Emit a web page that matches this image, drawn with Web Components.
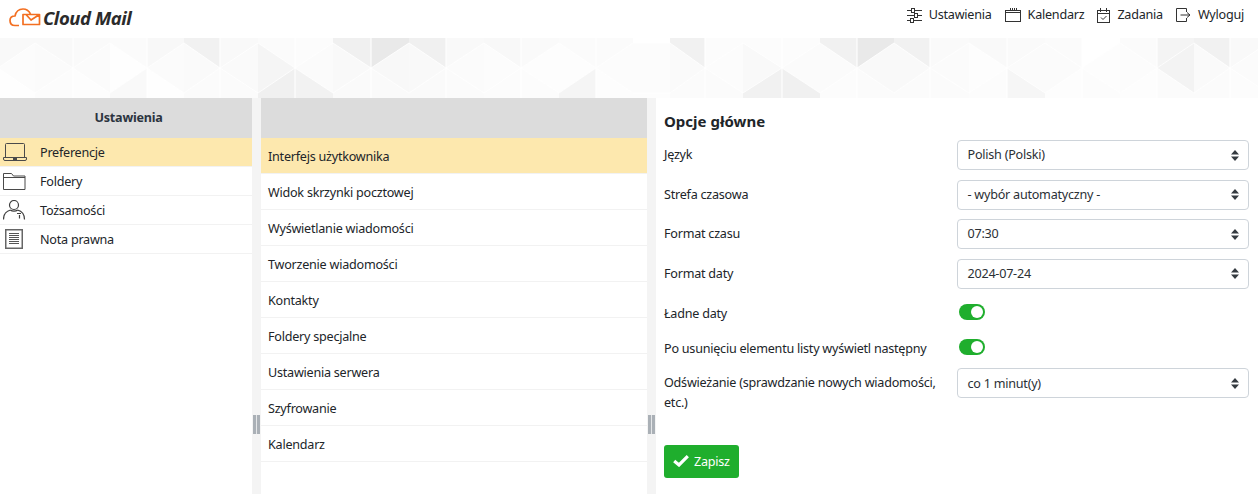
<!doctype html>
<html lang="pl">
<head>
<meta charset="utf-8">
<title>Cloud Mail</title>
<style>
  html, body { margin: 0; height: 100%; background: #fff; }
  body { font: 12.600px/19.500px "Noto Sans", sans-serif; letter-spacing: -.24px; color: #212529; overflow: hidden; }
</style>
</head>
<body>
<mail-app>
  <top-bar>
    <nav-link label="Ustawienia" icon="sliders"></nav-link>
    <nav-link label="Kalendarz" icon="calendar"></nav-link>
    <nav-link label="Zadania" icon="tasks"></nav-link>
    <nav-link label="Wyloguj" icon="logout"></nav-link>
  </top-bar>
  <triangle-banner></triangle-banner>
  <settings-layout>
    <list-pane slot="sections" title="Ustawienia">
      <section-row icon="laptop" active>Preferencje</section-row>
      <section-row icon="folder">Foldery</section-row>
      <section-row icon="person">Tożsamości</section-row>
      <section-row icon="doc">Nota prawna</section-row>
    </list-pane>
    <list-pane slot="groups">
      <group-row active>Interfejs użytkownika</group-row>
      <group-row>Widok skrzynki pocztowej</group-row>
      <group-row>Wyświetlanie wiadomości</group-row>
      <group-row>Tworzenie wiadomości</group-row>
      <group-row>Kontakty</group-row>
      <group-row>Foldery specjalne</group-row>
      <group-row>Ustawienia serwera</group-row>
      <group-row>Szyfrowanie</group-row>
      <group-row>Kalendarz</group-row>
    </list-pane>
    <options-form slot="form" title="Opcje główne">
      <form-row label="Język"><fake-select>Polish (Polski)</fake-select></form-row>
      <form-row label="Strefa czasowa"><fake-select>- wybór automatyczny -</fake-select></form-row>
      <form-row label="Format czasu"><fake-select>07:30</fake-select></form-row>
      <form-row label="Format daty"><fake-select>2024-07-24</fake-select></form-row>
      <form-row label="Ładne daty" kind="toggle"><on-toggle></on-toggle></form-row>
      <form-row label="Po usunięciu elementu listy wyświetl następny" kind="toggle"><on-toggle></on-toggle></form-row>
      <form-row label="Odświeżanie (sprawdzanie nowych wiadomości, etc.)"><fake-select>co 1 minut(y)</fake-select></form-row>
      <save-button>Zapisz</save-button>
    </options-form>
  </settings-layout>
</mail-app>

<script>
  const ICONS = {
    sliders: `<svg width="15" height="15" viewBox="0 0 15 15" fill="none" stroke="#333" stroke-width="1"><path d="M0 2.500h4M8 2.500h7M0 7.500h7.500M11 7.500h4M0 12.500h3M7 12.500h8"/><rect x="4.500" y=".5" width="3" height="4"/><rect x="7.500" y="5.500" width="3" height="4"/><rect x="3.500" y="10.500" width="3" height="4"/></svg>`,
    calendar: `<svg width="16" height="14" viewBox="0 0 16 14" fill="none" stroke="#333" stroke-width="1"><rect x=".5" y="2.500" width="15" height="11"/><path d="M.5 4.500h15M5.500 0v3M7.500 0v3M9.500 0v3M11.500 0v3"/></svg>`,
    tasks: `<svg width="13" height="15" viewBox="0 0 13 15" fill="none" stroke="#333" stroke-width="1"><rect x=".5" y="2.500" width="12" height="12"/><path d="M.5 5.500h12M3.500 0v4M9.500 0v4M4 9.500l2 2 3.500-3.500"/></svg>`,
    logout: `<svg width="15" height="14" viewBox="0 0 15 14" fill="none" stroke="#333" stroke-width="1"><path d="M10.500 4V.5h-10v13h10V10M4.500 7h9.500M11 4.500 14 7l-3 2.500"/></svg>`,
    laptop: `<svg width="24" height="18" viewBox="0 0 24 18" fill="none" stroke="#4a4a4a" stroke-width="1"><path d="M2.500 14V1.500q0-1 1-1h17q1 0 1 1V14"/><path d="M.5 14.500h23v1.500q0 1.500-1.500 1.500H2q-1.500 0-1.500-1.500z"/><path d="M10 16h4" stroke-width="2"/></svg>`,
    folder: `<svg width="23" height="17" viewBox="0 0 23 17" fill="none" stroke="#4a4a4a" stroke-width="1"><path d="M.5 16.500V.5h8l2 2.500h11.500v13.500zM.5 4.500h21.500"/></svg>`,
    person: `<svg width="23" height="20" viewBox="0 0 23 20" fill="none" stroke="#3f3f3f" stroke-width="1.200"><circle cx="11" cy="5" r="4.500"/><path d="M.5 19.500c0-5 3-8.500 7-9.500M21.500 19.500c0-5-3-8.500-7-9.500M7.500 10c1.500 1.500 5.500 1.500 7 0M16.500 15v3.500M14 13.500h4"/></svg>`,
    doc: `<svg width="18" height="20" viewBox="0 0 18 20" fill="none" style="margin-left:2px"><rect x=".75" y=".75" width="16.500" height="18.500" stroke="#666" stroke-width="1.500"/><path d="M4 4.500h10M4 6.500h10M4 8.500h10M4 10.500h10M4 12.500h10M4 14.500h10" stroke="#555"/></svg>`
  }

  // shades read off the banner, one [top, middle, bottom] per column
  const BANNER_X = [-2,35,73,110,147,184,220,258,295,333,371,409,446,484,521,559,596,633,670,705,743,782,820,857,894,930,969,1007,1045,1082,1120,1157,1194,1230,1268]
  const BANNER_LOW = [0,2,4,6,8,10,12,14,16,19,21,23,25,27,29,31,33]
  const BANNER_SHADES = [
    'f9 fc fe','f9 fb fc','fa fb fd','fb fe f9','f8 fb fe','f1 fa fb','f9 fa fb','fb f5 f0','fc fb f2',
    'f0 f9 fa','e9 f8 fa','f0 f9 fa','f9 fb fb','f8 fc fc','fa fd fc','fb fd f5','fb fc fd','ff fc fd',
    'f1 fa fb','fc fc fb','fc f9 f1','fc fb f0','f1 fb fc','e9 f9 fb','f1 f9 fb','fa fb fb','f9 fd fc',
    'fa fb f6','fb fb fd','ff fd fc','fb fc fd','f4 f3 fb','f1 fa fb','f9 fb fc'
  ]

  function shade (s) { return '#' + s + s + s }

  class MailApp extends HTMLElement {
    constructor () {
      super()
      this.attachShadow({ mode: 'open' }).innerHTML = `
        <style>:host { display: flex; flex-direction: column; height: 494px; }</style>
        <slot></slot>`
    }
  }

  class TopBar extends HTMLElement {
    constructor () {
      super()
      this.attachShadow({ mode: 'open' }).innerHTML = `
        <style>
          :host { display: flex; align-items: flex-start; justify-content: space-between; height: 38px; padding: 0 14px 0 9px; box-sizing: border-box; background: #fff; }
          .logo { display: flex; align-items: center; gap: 2px; padding-top: 7px; }
          .name { font: italic 700 18.500px/20px "Open Sans", sans-serif; letter-spacing: -.45px; color: #2b2b2b; padding-top: 1px; }
          nav { display: flex; gap: 13px; }
        </style>
        <div class="logo">
          <svg width="32" height="19" viewBox="0 0 32 19" fill="none" stroke="#f36f21" stroke-width="1.700" stroke-linejoin="round">
            <path d="M10 17.500H6C2.500 17.500 1 15 1 12.500 1 9.500 3 8 6 8 7 3.500 10 1 14 1c3.500 0 6 2 7.500 5"/>
            <path d="M14 16.500V6.500h16.500v10zM17 6.500l5 5.500 8.500-5.500"/>
          </svg>
          <span class="name">Cloud Mail</span>
        </div>
        <nav><slot></slot></nav>`
    }
  }

  class NavLink extends HTMLElement {
    constructor () {
      super()
      this.attachShadow({ mode: 'open' }).innerHTML = `
        <style>
          :host { display: flex; align-items: center; gap: 7px; line-height: 30px; }
          svg { display: block; }
        </style>
        ${ICONS[this.getAttribute('icon')]}
        <span>${this.getAttribute('label')}</span>`
    }
  }

  class TriangleBanner extends HTMLElement {
    constructor () {
      super()
      let polys = ''
      let lines = ''
      BANNER_SHADES.forEach((row, i) => {
        let [top, mid, bot] = row.split(' ').map(shade)
        let l = BANNER_X[i]
        let r = BANNER_X[i + 1]
        let ly = BANNER_LOW.includes(i) ? [30, 30] : [5, 55]
        let ry = BANNER_LOW.includes(i + 1) ? [30, 30] : [5, 55]
        polys += `<polygon fill="${top}" points="${l},0 ${r},0 ${r},${ry[0]} ${l},${ly[0]}"/>`
        polys += `<polygon fill="${mid}" points="${l},${ly[0]} ${r},${ry[0]} ${r},${ry[1]} ${l},${ly[1]}"/>`
        polys += `<polygon fill="${bot}" points="${l},${ly[1]} ${r},${ry[1]} ${r},60 ${l},60"/>`
        lines += `<path d="M${l} ${ly[0]}L${r} ${ry[0]}M${l} ${ly[1]}L${r} ${ry[1]}"/>`
        if (BANNER_LOW.includes(i)) lines += `<path d="M${l} 0V60" stroke-width="1.500"/>`
      })
      this.attachShadow({ mode: 'open' }).innerHTML = `
        <style>
          :host { display: block; height: 60px; background: #fbfbfb; overflow: hidden; }
          svg { display: block; }
        </style>
        <svg width="1258" height="60" viewBox="0 0 1258 60">${polys}<g stroke="#fff" stroke-opacity=".75" fill="none">${lines}</g></svg>`
    }
  }

  class SettingsLayout extends HTMLElement {
    constructor () {
      super()
      this.attachShadow({ mode: 'open' }).innerHTML = `
        <style>
          :host { display: grid; grid-template-columns: 252px 9px 386px 9px 1fr; flex: 1; min-height: 0; background: #fff; }
          .gap { background: #f4f4f4; display: flex; justify-content: center; padding: 317px 1px 0 0; box-sizing: border-box; }
          .grip { height: 19px; border-left: 3px solid #aab0b6; border-right: 3px solid #aab0b6; box-sizing: border-box; width: 7px; background: #e4e6e8; }
        </style>
        <slot name="sections"></slot>
        <div class="gap"><div class="grip"></div></div>
        <slot name="groups"></slot>
        <div class="gap"><div class="grip"></div></div>
        <slot name="form"></slot>`
    }
  }

  class ListPane extends HTMLElement {
    constructor () {
      super()
      this.attachShadow({ mode: 'open' }).innerHTML = `
        <style>
          :host { display: block; background: #fff; }
          header { height: 40px; padding: 0 0 1px 5px; box-sizing: border-box; background: #dcdcdc; display: flex; align-items: center; justify-content: center; font-weight: 700; color: #2c3440; }
        </style>
        <header>${this.getAttribute('title') || ''}</header>
        <slot></slot>`
      this.removeAttribute('title')
    }
  }

  class SectionRow extends HTMLElement {
    constructor () {
      super()
      this.attachShadow({ mode: 'open' }).innerHTML = `
        <style>
          :host { display: flex; align-items: center; height: 29px; box-sizing: border-box; border-bottom: 1px solid #f2f2f2; }
          :host([active]) { background: #fde8ae; }
          .ic { width: 40px; display: flex; padding-left: 3px; box-sizing: border-box; }
          svg { display: block; }
          .tx { padding-top: 2px; }
        </style>
        <span class="ic">${ICONS[this.getAttribute('icon')]}</span><span class="tx"><slot></slot></span>`
    }
  }

  class GroupRow extends HTMLElement {
    constructor () {
      super()
      this.attachShadow({ mode: 'open' }).innerHTML = `
        <style>
          :host { display: flex; align-items: center; height: 36px; padding: 2px 0 0 7px; box-sizing: border-box; border-bottom: 1px solid #f2f2f2; }
          :host([active]) { background: #fde8ae; }
        </style>
        <slot></slot>`
    }
  }

  class OptionsForm extends HTMLElement {
    constructor () {
      super()
      this.attachShadow({ mode: 'open' }).innerHTML = `
        <style>
          :host { display: block; padding: 12px 9px 0 8px; }
          h2 { margin: 0 0 7px; font-size: 15px; line-height: 23px; font-weight: 700; letter-spacing: 0; color: #212529; }
        </style>
        <h2>${this.getAttribute('title')}</h2>
        <slot></slot>`
      this.removeAttribute('title')
    }
  }

  class FormRow extends HTMLElement {
    constructor () {
      super()
      this.attachShadow({ mode: 'open' }).innerHTML = `
        <style>
          :host { display: grid; grid-template-columns: 293px 1fr; margin-bottom: 9.600px; }
          :host([kind=toggle]) { margin-bottom: 8px; min-height: 27px; align-items: center; }
          .label { padding-right: 12px; padding-top: 5px; }
          :host([kind=toggle]) .label { padding-top: 3px; }
        </style>
        <div class="label">${this.getAttribute('label')}</div>
        <div><slot></slot></div>`
    }
  }

  class FakeSelect extends HTMLElement {
    constructor () {
      super()
      this.attachShadow({ mode: 'open' }).innerHTML = `
        <style>
          :host { display: flex; align-items: center; justify-content: space-between; height: 30px; box-sizing: border-box; padding: 0 9px 0 9.500px; border: 1px solid #ced4da; border-radius: 4px; background: #fff; color: #2b3035; }
          svg { display: block; }
        </style>
        <span><slot></slot></span>
        <svg width="8" height="11" viewBox="0 0 8 11" fill="#343a40"><path d="M4 0l4 4.500H0zM0 6.500h8L4 11z"/></svg>`
    }
  }

  class OnToggle extends HTMLElement {
    constructor () {
      super()
      this.attachShadow({ mode: 'open' }).innerHTML = `
        <style>
          :host { display: flex; justify-content: flex-end; align-items: center; width: 26px; height: 16px; margin-left: 2px; padding: 0 2px; box-sizing: border-box; border-radius: 8px; background: #1fae2d; }
          i { display: block; width: 12px; height: 12px; border-radius: 50%; background: #fff; }
        </style>
        <i></i>`
    }
  }

  class SaveButton extends HTMLElement {
    constructor () {
      super()
      this.attachShadow({ mode: 'open' }).innerHTML = `
        <style>
          :host { display: inline-flex; align-items: center; gap: 5px; width: 75px; height: 33px; margin-top: 23px; padding: 0 0 0 9px; box-sizing: border-box; border-radius: 3px; background: #1fae2d; color: #fff; }
          svg { display: block; }
        </style>
        <svg width="16" height="12" viewBox="0 0 16 12" fill="none" stroke="#fff" stroke-width="3.200"><path d="M1.200 6l4.800 4L14.800 1.200"/></svg>
        <slot></slot>`
    }
  }

  customElements.define('mail-app', MailApp)
  customElements.define('top-bar', TopBar)
  customElements.define('nav-link', NavLink)
  customElements.define('triangle-banner', TriangleBanner)
  customElements.define('settings-layout', SettingsLayout)
  customElements.define('list-pane', ListPane)
  customElements.define('section-row', SectionRow)
  customElements.define('group-row', GroupRow)
  customElements.define('options-form', OptionsForm)
  customElements.define('form-row', FormRow)
  customElements.define('fake-select', FakeSelect)
  customElements.define('on-toggle', OnToggle)
  customElements.define('save-button', SaveButton)
</script>
</body>
</html>
